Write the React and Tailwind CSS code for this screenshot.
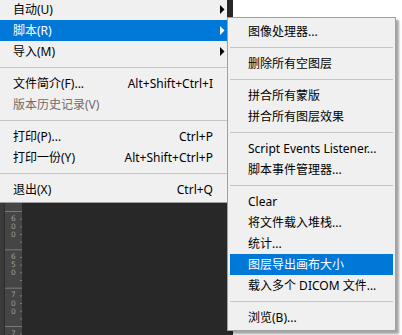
import React from 'react';

const FONT = { fontFamily: '"Noto Sans", "Noto Sans CJK SC", sans-serif' };

const mainItems = [
  { label: '自动(U)', arrow: true },
  { label: '脚本(R)', arrow: true, active: true },
  { label: '导入(M)', arrow: true },
  { sep: true },
  { label: '文件简介(F)...', shortcut: 'Alt+Shift+Ctrl+I' },
  { label: '版本历史记录(V)', disabled: true },
  { sep: true },
  { label: '打印(P)...', shortcut: 'Ctrl+P' },
  { label: '打印一份(Y)', shortcut: 'Alt+Shift+Ctrl+P' },
  { sep: true },
  { label: '退出(X)', shortcut: 'Ctrl+Q' },
];

const subItems = [
  { label: '图像处理器...' },
  { sep: true },
  { label: '删除所有空图层' },
  { sep: true },
  { label: '拼合所有蒙版' },
  { label: '拼合所有图层效果' },
  { sep: true },
  { label: 'Script Events Listener...' },
  { label: '脚本事件管理器...' },
  { sep: true },
  { label: 'Clear' },
  { label: '将文件载入堆栈...' },
  { label: '统计...' },
  { label: '图层导出画布大小', active: true },
  { label: '载入多个 DICOM 文件...' },
  { sep: true },
  { label: '浏览(B)...' },
];

const Arrow = ({ white }) => (
  <svg width="5" height="9" viewBox="0 0 5 9" className="block">
    <polygon points="0,0 4.5,4.5 0,9" fill={white ? '#ffffff' : '#000000'} />
  </svg>
);

const MainMenu = () => (
  <div className="w-[227px] -mt-px pb-[2px] bg-[#f0f0f0] border-b border-[#a0a0a0] flex flex-col">
    {mainItems.map((it, i) =>
      it.sep ? (
        <div key={i} className="h-[11px] flex items-center">
          <div className="h-px w-full bg-[#c4c4c4]" />
        </div>
      ) : (
        <div
          key={i}
          className={`h-[21px] flex items-center pl-[13px] text-[12px] leading-none ${
            it.active ? 'bg-[#0078d7] text-white' : it.disabled ? 'text-[#6d6d6d]' : 'text-black'
          }`}
        >
          <span className="flex-1 whitespace-nowrap">{it.label}</span>
          {it.shortcut && <span className="whitespace-nowrap">{it.shortcut}</span>}
          <span className="w-[14px] pl-[7px] flex items-center">
            {it.arrow && <Arrow white={it.active} />}
          </span>
        </div>
      )
    )}
  </div>
);

const SubMenu = () => (
  <div className="absolute left-[227px] top-[17px] w-[169px] bg-[#f0f0f0] border border-[#a0a0a0] pt-[3px] pb-[2px] px-[2px] shadow-[3px_3px_2px_rgba(0,0,0,0.35)] flex flex-col">
    {subItems.map((it, i) =>
      it.sep ? (
        <div key={i} className="h-[11px] flex items-center">
          <div className="h-px w-full bg-[#c4c4c4]" />
        </div>
      ) : (
        <div
          key={i}
          className={`h-[21px] flex items-center pl-[18px] text-[12px] leading-none whitespace-nowrap ${
            it.active ? 'bg-[#0078d7] text-white' : 'text-black'
          }`}
        >
          {it.label}
        </div>
      )
    )}
  </div>
);

// vertical ruler on the left edge of the canvas
const Ruler = () => {
  const majors = [
    { y: 8, digits: ['6', '0', '0'] },
    { y: 46.3, digits: ['6', '5', '0'] },
    { y: 84.7, digits: ['7', '0', '0'] },
    { y: 123, digits: ['7'] },
  ];
  const step = 38.33 / 5;
  return (
    <svg width="22" height="133" viewBox="0 0 22 133" className="block shrink-0">
      <rect x="0" y="0" width="22" height="133" fill="#454545" />
      <rect x="0" y="0" width="3.5" height="133" fill="#3b3b3b" />
      <rect x="3.5" y="0" width="1.5" height="133" fill="#2f2f2f" />
      {majors.map((m, i) => (
        <g key={i}>
          <rect x="5" y={m.y} width="17" height="1" fill="#7a7a7a" />
          {[1, 2, 3, 4].map((k) => (
            <rect key={k} x="20" y={m.y + k * step} width="2" height="1" fill="#7a7a7a" />
          ))}
          {m.digits.map((d, k) => (
            <text
              key={k}
              x="13.3"
              y={m.y + 9.5 + k * 8.3}
              fontSize="7.5"
              textAnchor="middle"
              fill="#9c9c9c"
              fontFamily="DejaVu Sans, sans-serif"
            >
              {d}
            </text>
          ))}
        </g>
      ))}
    </svg>
  );
};

export default function App() {
  return (
    <div className="relative w-[402px] h-[335px] overflow-hidden bg-white flex" style={FONT}>
      <div className="w-[233px] h-full bg-[#282828] flex flex-col">
        <MainMenu />
        <div className="flex-1 flex">
          <Ruler />
        </div>
      </div>
      <SubMenu />
    </div>
  );
}
